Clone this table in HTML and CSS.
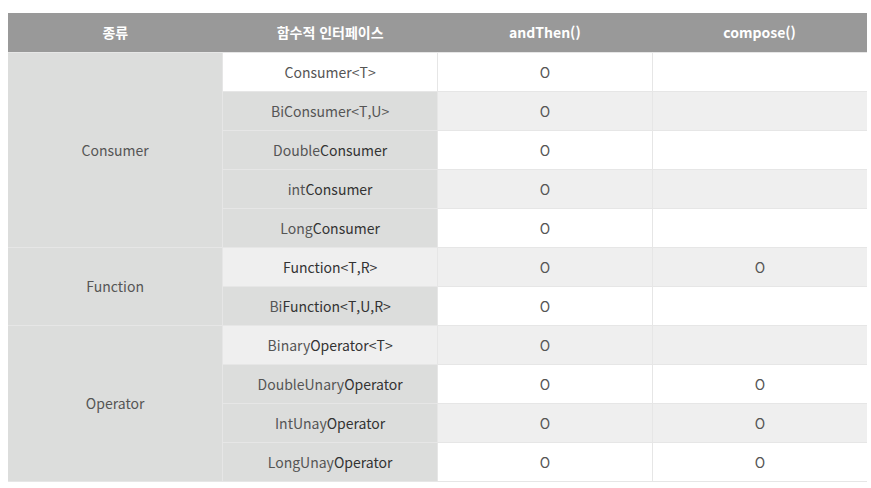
FILE: index.html
```html
<!DOCTYPE html>
<html lang="ko">
<head>
<meta charset="utf-8">
<link rel="stylesheet" href="styles.css">
</head>
<body>
<table class="fi-table">
  <colgroup><col class="c"><col class="c"><col class="c"><col class="c"></colgroup>
  <thead>
    <tr><th>종류</th><th>함수적 인터페이스</th><th>andThen()</th><th>compose()</th></tr>
  </thead>
  <tbody>
    <tr class="w"><td class="kind" rowspan="5">Consumer</td><td class="iface white">Consumer&lt;T&gt;</td><td>O</td><td></td></tr>
    <tr class="g"><td class="iface">BiConsumer&lt;T,U&gt;</td><td>O</td><td></td></tr>
    <tr class="w"><td class="iface">Double<span class="dk">Consumer</span></td><td>O</td><td></td></tr>
    <tr class="g"><td class="iface">int<span class="dk">Consumer</span></td><td>O</td><td></td></tr>
    <tr class="w"><td class="iface">Long<span class="dk">Consumer</span></td><td>O</td><td></td></tr>
    <tr class="g"><td class="kind" rowspan="2">Function</td><td class="iface light"><span class="dk">Function&lt;T,R&gt;</span></td><td>O</td><td>O</td></tr>
    <tr class="w"><td class="iface">Bi<span class="dk">Function&lt;T,U,R&gt;</span></td><td>O</td><td></td></tr>
    <tr class="g"><td class="kind" rowspan="4">Operator</td><td class="iface light">Binary<span class="dk">Operator&lt;T&gt;</span></td><td>O</td><td></td></tr>
    <tr class="w"><td class="iface">DoubleUnary<span class="dk">Operator</span></td><td>O</td><td>O</td></tr>
    <tr class="g"><td class="iface">IntUnay<span class="dk">Operator</span></td><td>O</td><td>O</td></tr>
    <tr class="w"><td class="iface">LongUnay<span class="dk">Operator</span></td><td>O</td><td>O</td></tr>
  </tbody>
</table>
</body>
</html>
```
FILE: styles.css
```css
html, body {
  margin: 0;
  padding: 0;
  background: #ffffff;
}
body {
  padding: 13px 4px 0 8px;
  font-family: "Noto Sans CJK KR", "Noto Sans", sans-serif;
  font-size: 14px;
  color: #555555;
}
.fi-table {
  width: 859px;
  border-collapse: collapse;
  table-layout: fixed;
}
.fi-table .c {
  width: 25%;
}
.fi-table th {
  background: #999999;
  color: #ffffff;
  font-weight: 700;
  height: 38px;
  padding: 0 0 1px;
  text-align: center;
  border: none;
}
.fi-table td {
  height: 37px;
  padding: 0 0 1px;
  text-align: center;
  vertical-align: middle;
  border: 1px solid #e6e6e6;
}
.fi-table tr.w td { background: #ffffff; }
.fi-table tr.g td { background: #efefef; }
.fi-table tr td.kind { background: #dcdddc; }
.fi-table tr td.iface { background: #dcdddc; }
.fi-table tr td.iface.white { background: #ffffff; }
.fi-table tr td.iface.light { background: #efefef; }
.fi-table tr td:first-child { border-left: none; }
.fi-table tr td:last-child { border-right: none; }
.dk { color: #333333; }
```
